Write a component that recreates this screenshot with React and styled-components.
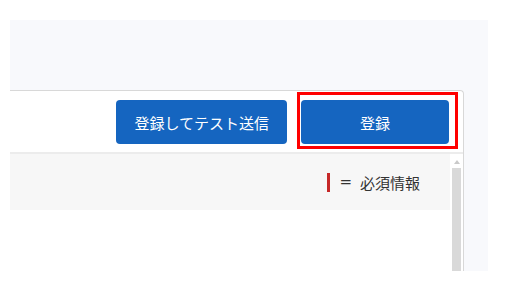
import React from 'react';
import styled, { createGlobalStyle } from 'styled-components';

const GlobalStyle = createGlobalStyle`
  body {
    margin: 0;
    background: #fff;
    font-family: "Noto Sans CJK JP", "Noto Sans", sans-serif;
  }
`;

const Page = styled.div`
  margin: 20px 0 0 10px;
  width: 478px;
  height: 251px;
  box-sizing: border-box;
  padding: 70px 24px 0 0;
  background: #f8f9fc;
  overflow: hidden;
`;

const Panel = styled.div`
  height: 100%;
  display: flex;
  flex-direction: column;
  background: #fff;
  border: 1px solid #d8d8d8;
  border-left: none;
  border-bottom: none;
  border-radius: 0 4px 0 0;
`;

const Toolbar = styled.div`
  display: flex;
  justify-content: flex-end;
  gap: 14px;
  padding: 9px 14px 8px;
  border-bottom: 2px solid #ececec;
`;

const Button = styled.button`
  height: 44px;
  min-width: ${props => (props.minWidth ? `${props.minWidth}px` : 'auto')};
  padding: 0 18px;
  border: none;
  border-radius: 4px;
  background: #1565c0;
  color: #fff;
  font-family: inherit;
  font-size: 15px;
  line-height: 1;
  cursor: pointer;
`;

const Highlight = styled.div`
  position: relative;
  display: flex;
`;

const HighlightFrame = styled.span`
  position: absolute;
  top: -8px;
  left: -4px;
  right: -9px;
  bottom: -5px;
  border: 3px solid #ff0000;
  pointer-events: none;
`;

const Body = styled.div`
  flex: 1;
  display: flex;
  min-height: 0;
`;

const Content = styled.div`
  flex: 1;
`;

const Legend = styled.div`
  height: 56px;
  display: flex;
  align-items: center;
  justify-content: flex-end;
  padding-right: 30px;
  background: #f7f7f7;
  color: #333;
  font-size: 15px;
`;

const RequiredMark = styled.span`
  width: 3px;
  height: 19px;
  margin-right: 9px;
  background: #c62828;
`;

const Equals = styled.span`
  margin-right: 8px;
  font-family: "DejaVu Sans", sans-serif;
  font-size: 15px;
`;

const Scrollbar = styled.div`
  width: 13px;
  display: flex;
  flex-direction: column;
  align-items: flex-start;
  padding: 6px 0 0 2px;
  box-sizing: border-box;
`;

const ScrollArrow = styled.span`
  width: 0;
  height: 0;
  margin: 0 0 4px 2px;
  border-left: 3px solid transparent;
  border-right: 3px solid transparent;
  border-bottom: 4px solid #c9c9c9;
`;

const ScrollThumb = styled.span`
  flex: 1;
  width: 9px;
  background: #d9d9d9;
`;

const App = () => (
  <>
    <GlobalStyle />
    <Page>
      <Panel>
        <Toolbar>
          <Button type="button">登録してテスト送信</Button>
          <Highlight>
            <Button type="button" minWidth={148}>
              登録
            </Button>
            <HighlightFrame />
          </Highlight>
        </Toolbar>
        <Body>
          <Content>
            <Legend>
              <RequiredMark />
              <Equals>=</Equals>
              必須情報
            </Legend>
          </Content>
          <Scrollbar>
            <ScrollArrow />
            <ScrollThumb />
          </Scrollbar>
        </Body>
      </Panel>
    </Page>
  </>
);

export default App;
